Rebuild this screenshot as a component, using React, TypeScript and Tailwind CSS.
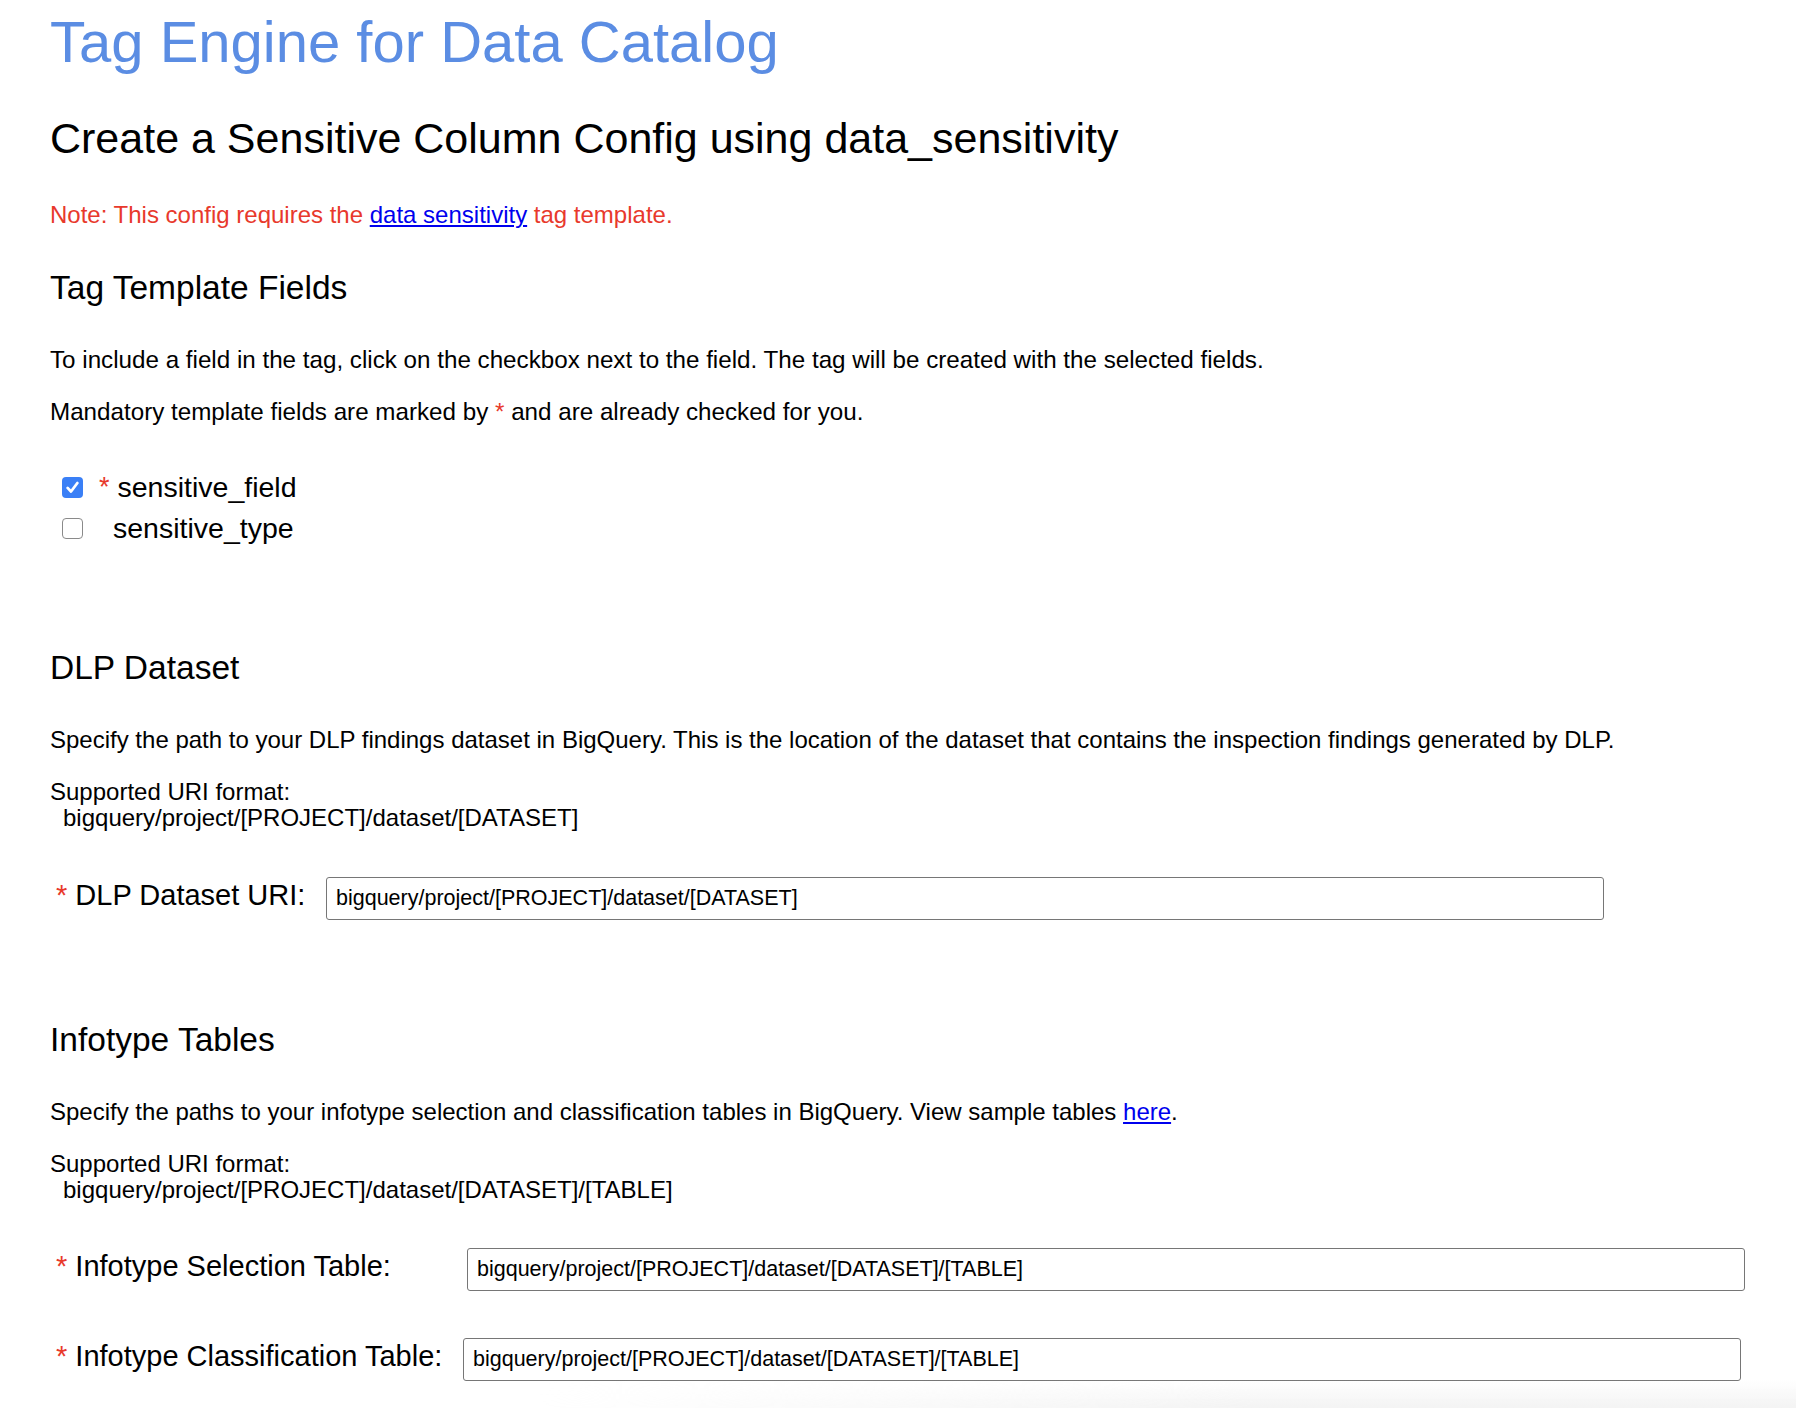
import React from 'react';

const fieldUri = 'bigquery/project/[PROJECT]/dataset/[DATASET]';
const tableUri = 'bigquery/project/[PROJECT]/dataset/[DATASET]/[TABLE]';

function Checkbox({ checked }: { checked: boolean }) {
  if (checked) {
    return (
      <span className="flex h-[21px] w-[21px] items-center justify-center rounded-[4px] bg-[#3a7ff6]">
        <svg viewBox="0 0 16 16" className="h-[17px] w-[17px]" fill="none">
          <path d="M3.4 8.4 6.6 11.8 12.6 3.8" stroke="white" strokeWidth="2.6" strokeLinecap="round" strokeLinejoin="round" />
        </svg>
      </span>
    );
  }
  return <span className="block h-[21px] w-[21px] rounded-[4px] border-[1.5px] border-[#8a8a8a] bg-white" />;
}

function UriRow({ label, labelWidth, value }: { label: string; labelWidth: string; value: string }) {
  return (
    <div className="flex h-[43px] items-start">
      <label className={`${labelWidth} shrink-0 pl-[6px] text-[29px] leading-[37px] whitespace-nowrap`}>
        <span className="text-[#e8392c]">*</span> {label}
      </label>
      <input
        type="text"
        defaultValue={value}
        className="h-[43px] w-[1278px] rounded-[3px] border border-[#767676] bg-white pl-[9px] text-[21.5px] text-black outline-none"
      />
    </div>
  );
}

function UriFormat({ format }: { format: string }) {
  return (
    <div className="mt-[25px] text-[24px] leading-[26px]">
      <div>Supported URI format:</div>
      <div className="pl-[13px]">{format}</div>
    </div>
  );
}

export default function App() {
  return (
    <div className="relative min-h-[1408px] overflow-hidden bg-white px-[50px] pt-[8px] font-['Liberation_Sans',Arial,sans-serif] text-black">
      {/* Header */}
      <h1 className="text-[58px] leading-[68px] text-[#5b8de3]">Tag Engine for Data Catalog</h1>
      <h2 className="mt-[36px] text-[43px] leading-[52px]">Create a Sensitive Column Config using data_sensitivity</h2>
      <p className="mt-[37px] text-[24px] leading-[28px] text-[#e8392c]">
        Note: This config requires the{' '}
        <a href="#" className="text-[#0000ee] underline">data sensitivity</a> tag template.
      </p>

      {/* Tag template fields */}
      <h3 className="mt-[40px] text-[33.5px] leading-[38px]">Tag Template Fields</h3>
      <p className="mt-[39px] text-[24.2px] leading-[28px]">
        To include a field in the tag, click on the checkbox next to the field. The tag will be created with the selected fields.
      </p>
      <p className="mt-[24px] text-[24.2px] leading-[28px]">
        Mandatory template fields are marked by <span className="text-[#e8392c]">*</span> and are already checked for you.
      </p>
      <div className="mt-[41px] text-[28.5px]">
        <div className="flex h-[41px] items-center leading-[41px]">
          <span className="ml-[12px]"><Checkbox checked /></span>
          <span className="ml-[16px] text-[27px] text-[#e8392c]">*</span>
          <span className="ml-[8px]">sensitive_field</span>
        </div>
        <div className="flex h-[41px] items-center leading-[41px]">
          <span className="ml-[12px]"><Checkbox checked={false} /></span>
          <span className="ml-[30px]">sensitive_type</span>
        </div>
      </div>

      {/* DLP dataset */}
      <h3 className="mt-[100px] text-[33.5px] leading-[38px]">DLP Dataset</h3>
      <p className="mt-[39px] text-[24px] leading-[28px]">
        Specify the path to your DLP findings dataset in BigQuery. This is the location of the dataset that contains the inspection findings generated by DLP.
      </p>
      <UriFormat format={fieldUri} />
      <div className="mt-[46px]">
        <UriRow label="DLP Dataset URI:" labelWidth="w-[276px]" value={fieldUri} />
      </div>

      {/* Infotype tables */}
      <h3 className="mt-[101px] text-[33.5px] leading-[38px]">Infotype Tables</h3>
      <p className="mt-[39px] text-[24px] leading-[28px]">
        Specify the paths to your infotype selection and classification tables in BigQuery. View sample tables{' '}
        <a href="#" className="text-[#0000ee] underline">here</a>.
      </p>
      <UriFormat format={tableUri} />
      <div className="mt-[45px]">
        <UriRow label="Infotype Selection Table:" labelWidth="w-[417px]" value={tableUri} />
      </div>
      <div className="mt-[47px]">
        <UriRow label="Infotype Classification Table:" labelWidth="w-[413px]" value={tableUri} />
      </div>

      {/* faint shade at the bottom edge */}
      <div className="pointer-events-none absolute bottom-0 left-0 right-0 h-[28px] bg-[linear-gradient(to_bottom,rgba(255,255,255,0),#f3f3f3)] [mask-image:linear-gradient(to_right,transparent_30%,black_70%)]" />
    </div>
  );
}
